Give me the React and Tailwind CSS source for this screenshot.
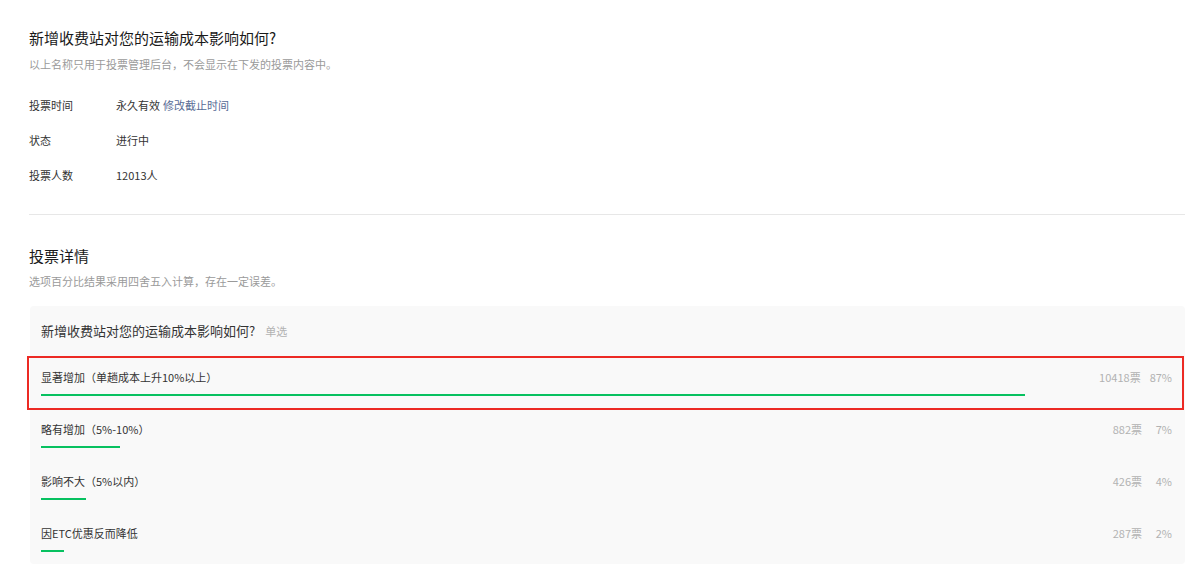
const options = [
	{ label: '显著增加（单趟成本上升10%以上）', votes: 10418, percent: 87, marked: true },
	{ label: '略有增加（5%-10%）', votes: 882, percent: 7 },
	{ label: '影响不大（5%以内）', votes: 426, percent: 4 },
	{ label: '因ETC优惠反而降低', votes: 287, percent: 2 }
];

const info = [
	{ label: '投票时间', value: '永久有效', link: '修改截止时间' },
	{ label: '状态', value: '进行中' },
	{ label: '投票人数', value: '12013人' }
];

function OptionRow({ option }) {
	return (
		<div className="relative h-[52px] pl-[11px] pr-[13px] pt-[13px]">
			{option.marked && (
				<span className="pointer-events-none absolute -left-[3px] right-[1px] top-0 -bottom-[2px] border-2 border-[#ec2a24]" />
			)}
			<div className="flex items-center justify-between text-[11px] leading-[16px]">
				<span className="text-[#333]">{option.label}</span>
				<span className="flex text-[#b2b2b2]">
					<span>{option.votes}票</span>
					<span className="ml-[9px] min-w-[21px] text-right">{option.percent}%</span>
				</span>
			</div>
			<div className="mt-[9px] h-[2px]">
				<div className="h-[2px] bg-[#07c160]" style={{ width: `${option.percent}%` }} />
			</div>
		</div>
	);
}

export default function App() {
	return (
		<div className="min-h-[566px] bg-white pl-[29px] pr-[15px] pt-[28px] font-['Noto_Sans_CJK_SC','Noto_Sans',sans-serif]">
			<h1 className="text-[15px] leading-[20px] text-[#1a1a1a]">新增收费站对您的运输成本影响如何?</h1>
			<p className="mt-[8px] text-[11px] leading-[16px] text-[#9a9a9a]">
				以上名称只用于投票管理后台，不会显示在下发的投票内容中。
			</p>

			<div className="mt-[25px] flex flex-col gap-[19px] text-[11px] leading-[16px] text-[#333]">
				{info.map(row => (
					<div key={row.label} className="flex">
						<span className="w-[87px]">{row.label}</span>
						<span>
							{row.value}
							{row.link && <span className="ml-[3px] text-[#576b95]">{row.link}</span>}
						</span>
					</div>
				))}
			</div>

			<div className="mt-[31px] h-px bg-[#e7e7e7]" />

			<h2 className="mt-[31px] text-[15px] leading-[20px] text-[#1a1a1a]">投票详情</h2>
			<p className="mt-[7px] text-[11px] leading-[16px] text-[#9a9a9a]">
				选项百分比结果采用四舍五入计算，存在一定误差。
			</p>

			<div className="ml-px mt-[17px] rounded-[4px] bg-[#f9f9f9]">
				<div className="flex h-[50px] items-center pl-[11px]">
					<span className="text-[13px] leading-[18px] text-[#333]">新增收费站对您的运输成本影响如何?</span>
					<span className="ml-[10px] text-[11px] text-[#b2b2b2]">单选</span>
				</div>
				{options.map(option => (
					<OptionRow key={option.label} option={option} />
				))}
			</div>
		</div>
	);
}
